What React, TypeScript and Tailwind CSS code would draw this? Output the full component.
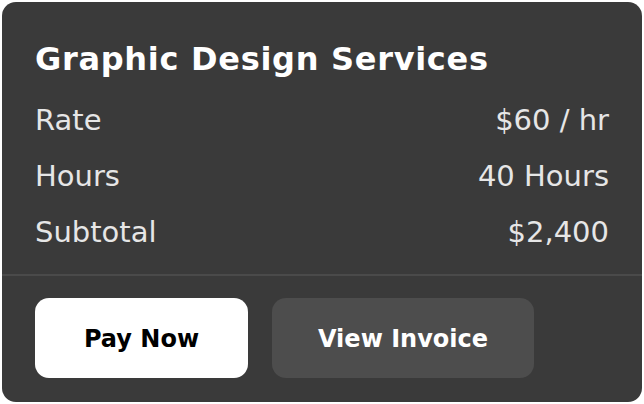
const rows = [
  { label: "Rate", value: "$60 / hr" },
  { label: "Hours", value: "40 Hours" },
  { label: "Subtotal", value: "$2,400" },
];

export default function App() {
  return (
    <div className="h-[404px] w-[644px] bg-white p-[2px] font-['DejaVu_Sans',sans-serif]">
      <div className="flex h-[400px] w-[640px] flex-col overflow-hidden rounded-[14px] bg-[#3a3a3a]">
        <div className="px-[33px] pb-[13px] pt-[33px]">
          <h1 className="h-[48px] text-[32px] font-bold leading-[48px] tracking-[0.7px] text-white">
            Graphic Design Services
          </h1>
          <div className="mt-[10px]">
            {rows.map((r) => (
              <div
                key={r.label}
                className="flex h-[56px] items-center justify-between text-[29px] text-[#e6e6e6]"
              >
                <span>{r.label}</span>
                <span>{r.value}</span>
              </div>
            ))}
          </div>
        </div>
        <div className="h-[2px] bg-[#4a4a4a]" />
        <div className="flex gap-[24px] px-[33px] pt-[22px]">
          <button className="h-[80px] w-[213px] rounded-[14px] bg-white pt-[2px] text-[24px] font-bold text-black">
            Pay Now
          </button>
          <button className="h-[80px] w-[262px] rounded-[14px] bg-[#4d4d4d] pt-[2px] text-[24px] font-bold text-white">
            View Invoice
          </button>
        </div>
      </div>
    </div>
  );
}
